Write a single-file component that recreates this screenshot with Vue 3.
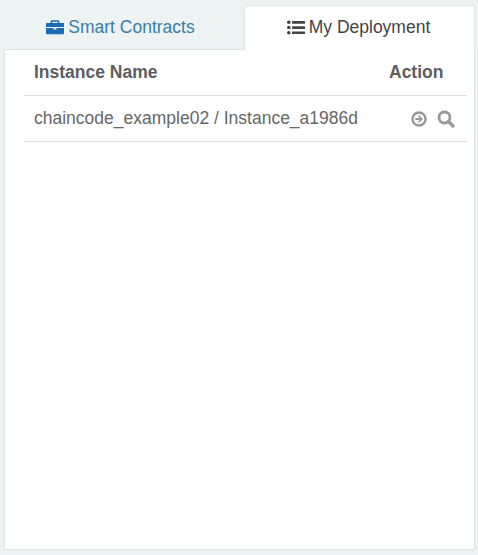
<script setup>
const rows = [{ name: 'chaincode_example02 / Instance_a1986d' }]
</script>

<template>
  <div class="page">
    <ul class="tabs">
      <li class="tab">
        <a class="tab-link">
          <svg class="tab-icon" width="18" height="16" viewBox="0 0 18 16">
            <path fill="#1b6cb5" d="M6 1.200h6c.8 0 1.400.6 1.400 1.400V4H18v4H0V4h4.600V2.600C4.600 1.800 5.200 1.200 6 1.200zM6.200 2.800V4h5.600V2.800z" />
            <path fill="#1b6cb5" d="M0 9h7.500v1.500h3V9H18v5c0 .8-.6 1.300-1.300 1.300H1.300C.6 15.300 0 14.800 0 14z" />
          </svg>
          Smart Contracts
        </a>
      </li>
      <li class="tab active">
        <a class="tab-link">
          <svg class="tab-icon" width="18" height="15" viewBox="0 0 18 15">
            <g fill="#444">
              <circle cx="1.800" cy="2.300" r="1.800" />
              <circle cx="1.800" cy="7.500" r="1.800" />
              <circle cx="1.800" cy="12.700" r="1.800" />
              <rect x="5" y="1" width="13" height="2.700" rx=".5" />
              <rect x="5" y="6.200" width="13" height="2.700" rx=".5" />
              <rect x="5" y="11.400" width="13" height="2.700" rx=".5" />
            </g>
          </svg>
          My Deployment
        </a>
      </li>
    </ul>

    <div class="panel">
      <table class="grid">
        <thead>
          <tr>
            <th>Instance Name</th>
            <th class="action-col">Action</th>
          </tr>
        </thead>
        <tbody>
          <tr v-for="row in rows" :key="row.name">
            <td>{{ row.name }}</td>
            <td class="actions">
              <svg width="16" height="16" viewBox="0 0 16 16">
                <circle cx="8" cy="8" r="6.500" fill="none" stroke="#999" stroke-width="2.400" />
                <path fill="#999" d="M8 3.900 12.100 8 8 12.100 6.900 11l2-2H4.300V7h4.600l-2-2z" />
              </svg>
              <svg width="18" height="18" viewBox="0 0 18 18">
                <circle cx="7.500" cy="7.500" r="5.500" fill="none" stroke="#999" stroke-width="2.800" />
                <path d="M11.500 11.500 16 16" stroke="#999" stroke-width="3.400" stroke-linecap="round" />
              </svg>
            </td>
          </tr>
        </tbody>
      </table>
    </div>
  </div>
</template>

<style>
body {
  background: #edf2f2;
}
</style>

<style scoped>
.page {
  height: 555px;
  box-sizing: border-box;
  padding: 5px 3px 5px 4px;
  display: flex;
  flex-direction: column;
  font-family: "Liberation Sans", Arial, sans-serif;
  color: #666;
}

.tabs {
  list-style: none;
  margin: 0;
  padding: 0;
  display: flex;
  gap: 1px;
  height: 45px;
  flex: none;
}

.tab {
  flex: 0 0 239px;
  display: flex;
  align-items: center;
  justify-content: center;
  box-sizing: border-box;
  padding-right: 6px;
  color: #3a7ca8;
  border-bottom: 1px solid #dfe3e3;
}

.tab.active {
  flex: 1;
  padding: 0 2px 2px 0;
  background: #fff;
  color: #444;
  border: 1px solid #e3e6e6;
  border-bottom: 0;
  border-radius: 4px 4px 0 0;
}

.tab-link {
  display: flex;
  align-items: center;
  gap: 4px;
  font-size: 17.500px;
}

.tab-icon {
  flex: none;
}

.panel {
  flex: 1;
  background: #fff;
  border: 1px solid #dfe3e3;
  border-top: 0;
  padding: 0 7px 0 19px;
}

.grid {
  width: 100%;
  border-collapse: collapse;
  font-size: 17.500px;
}

.grid th,
.grid td {
  padding: 0 0 0 10px;
  box-sizing: border-box;
  border-bottom: 1px solid #dcdfdf;
  text-align: left;
}

.grid th {
  height: 45px;
  font-weight: 700;
  color: #5e5e5e;
}

.grid td {
  height: 46px;
}

.action-col {
  width: 88px;
}

.actions {
  white-space: nowrap;
  text-align: right !important;
  padding-right: 12px !important;
}

.actions svg {
  vertical-align: middle;
}

.actions svg + svg {
  margin-left: 10px;
}
</style>
